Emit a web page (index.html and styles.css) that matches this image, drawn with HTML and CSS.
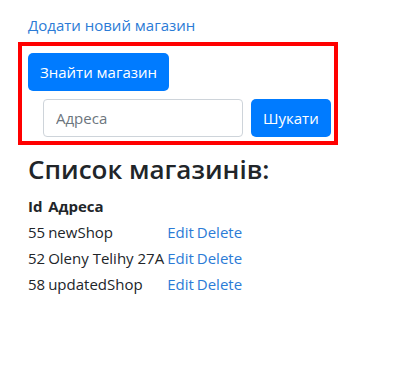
FILE: index.html
```html
<!DOCTYPE html>
<html lang="uk">
<head>
    <meta charset="UTF-8">
    <meta name="viewport" content="width=device-width, initial-scale=1.0">
    <title>Магазини</title>
    <link rel="stylesheet" href="styles.css">
</head>
<body>
    <div class="page">
        <a href="#" class="add-link">Додати новий магазин</a>

        <div class="search-box">
            <button class="btn">Знайти магазин</button>
            <form class="search-form">
                <input type="text" class="search-input" placeholder="Адреса">
                <button type="submit" class="btn">Шукати</button>
            </form>
        </div>

        <h2>Список магазинів:</h2>
        <table class="shops">
            <thead>
                <tr><th>Id</th><th>Адреса</th><th></th></tr>
            </thead>
            <tbody>
                <tr><td>55</td><td>newShop</td><td><a href="#">Edit</a><a href="#">Delete</a></td></tr>
                <tr><td>52</td><td>Oleny Telihy 27A</td><td><a href="#">Edit</a><a href="#">Delete</a></td></tr>
                <tr><td>58</td><td>updatedShop</td><td><a href="#">Edit</a><a href="#">Delete</a></td></tr>
            </tbody>
        </table>
    </div>
</body>
</html>
```
FILE: styles.css
```css
body {
    margin: 0;
    font-family: "Open Sans", sans-serif;
    font-size: 15px;
    color: #212529;
    background: #fff;
}

.page {
    padding: 13px 28px;
}

a {
    color: #2b7bd6;
    text-decoration: none;
}

.add-link {
    display: block;
    line-height: 24px;
}

.search-box {
    margin: 5px 0 0 -10px;
    width: 303px;
    border: 4px solid #f00;
    padding: 7px 3px 4px 6px;
}

.btn {
    font-family: inherit;
    font-size: 15px;
    height: 38px;
    padding: 0 12px;
    color: #fff;
    background: #007bff;
    border: none;
    border-radius: 5px;
    cursor: pointer;
}

.search-form {
    display: flex;
    gap: 8px;
    margin: 8px 0 0 15px;
}

.search-input {
    font-family: inherit;
    font-size: 15px;
    width: 200px;
    height: 38px;
    box-sizing: border-box;
    padding: 0 12px;
    border: 1px solid #ced4da;
    border-radius: 4px;
    color: #495057;
}

.search-input::placeholder {
    color: #6c757d;
}

h2 {
    font-size: 26px;
    font-weight: 600;
    line-height: 32px;
    margin: 8px 0 8px;
}

.shops {
    border-collapse: collapse;
}

.shops th,
.shops td {
    padding: 0 3px 0 0;
    height: 26px;
    text-align: left;
}

.shops th {
    font-weight: 700;
}

.shops a {
    margin-right: 3px;
}
```
